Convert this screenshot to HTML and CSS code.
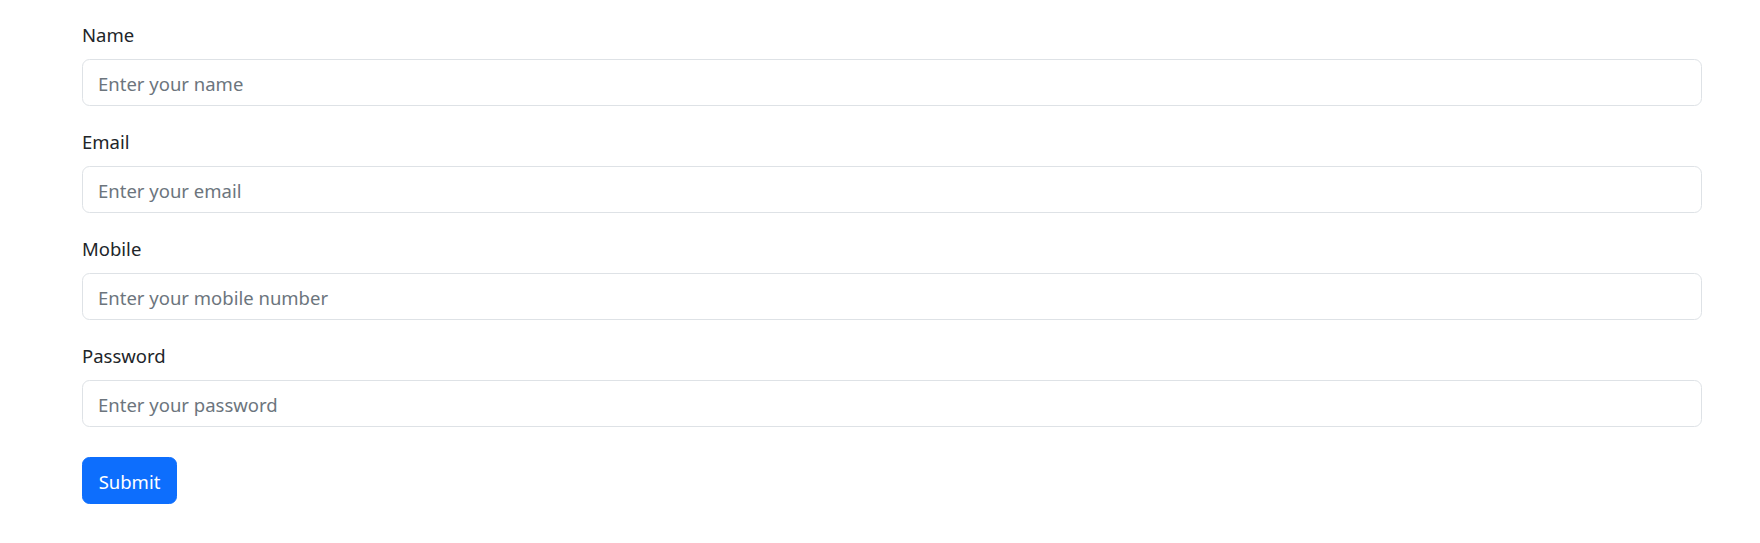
FILE: index.html
```html
<!DOCTYPE html>
<html lang="en">
<head>
<meta charset="utf-8">
<title>Form</title>
<link rel="stylesheet" href="styles.css">
</head>
<body>
<div class="container">
  <form class="form">
    <div class="field">
      <label class="label" for="name">Name</label>
      <input class="input" id="name" type="text" placeholder="Enter your name">
    </div>
    <div class="field">
      <label class="label" for="email">Email</label>
      <input class="input" id="email" type="email" placeholder="Enter your email">
    </div>
    <div class="field">
      <label class="label" for="mobile">Mobile</label>
      <input class="input" id="mobile" type="text" placeholder="Enter your mobile number">
    </div>
    <div class="field">
      <label class="label" for="password">Password</label>
      <input class="input" id="password" type="password" placeholder="Enter your password">
    </div>
    <button class="btn" type="submit">Submit</button>
  </form>
</div>
</body>
</html>
```
FILE: styles.css
```css
* { box-sizing: border-box; }
html, body { margin: 0; padding: 0; background: #fff; }
body {
  font-family: "Noto Sans", "Open Sans", "Liberation Sans", sans-serif;
  font-size: 18.5px;
  line-height: 30px;
  color: #212529;
}
.container {
  padding: 19px 0 0 82px;
}
.form {
  width: 1620px;
  display: flex;
  flex-direction: column;
}
.field {
  display: flex;
  flex-direction: column;
  margin-bottom: 20px;
}
.label {
  display: block;
  margin-bottom: 10px;
  line-height: 30px;
  padding-top: 1px;
  height: 30px;
}
.input {
  display: block;
  width: 100%;
  height: 47px;
  padding: 8px 15px 6px;
  font-family: inherit;
  font-size: 18.5px;
  line-height: 30px;
  color: #212529;
  background: #fff;
  border: 1px solid #dee2e6;
  border-radius: 7.5px;
  outline: none;
}
.input::placeholder { color: #6c757d; opacity: 1; }
.btn {
  align-self: flex-start;
  margin-top: 10px;
  height: 47px;
  width: 95px;
  padding: 8px 0 6px;
  font-family: inherit;
  font-size: 18.5px;
  line-height: 30px;
  color: #fff;
  background: #0d6efd;
  border: 1px solid #0d6efd;
  border-radius: 7.5px;
  cursor: pointer;
}
```
